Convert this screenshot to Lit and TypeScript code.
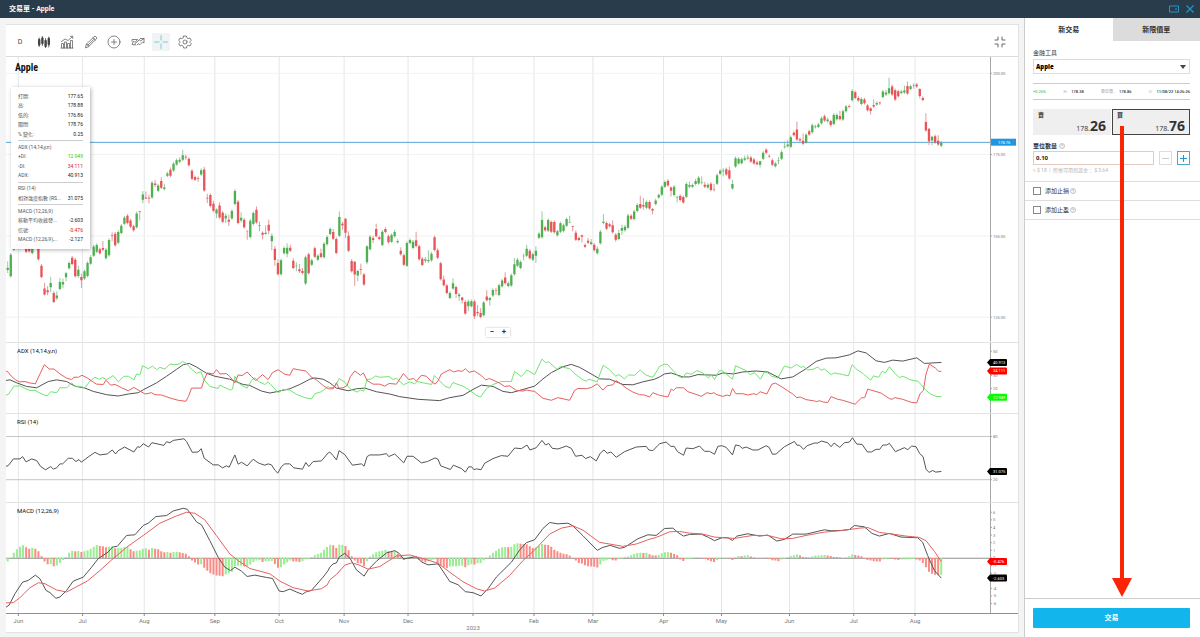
import { LitElement, html, svg, css } from "lit";
import { customElement, property } from "lit/decorators.js";

// Chart space: three units per CSS pixel at the base window size.
const UNIT_LEFT = 18;
const UNIT_WIDTH = 2954;
const FIRST_BAR = 23.1;
const BAR_STEP = 9.219;

// Daily sessions: direction, body top, body bottom, optional high and low.
// Each run is measured from its own base level.
const RUNS: { base: number; bars: string }[] = [
  {
    base: 690,
    bars: `u 114 121 95 130;u 75 140;u 50 60;u 40 50;d 42 56;d 40 52;d 40 66 40 70;d 50 65;u 50 70;d 30 50;d 50 89;d 108 142;
    d 177 195 160 198;d 182 188 170 197;u 160 173 142 188;d 190 217;u 198 206 185 212;u 157 178 145;u 157 165 147 175;
    u 131 143 127 155;u 100 116;d 84 103;d 90 140;u 120 139 108 145;d 142 152 132 175;u 125 147;u 100 139`,
  },
  {
    base: 390,
    bars: `u 383 402 376;u 351 378;u 346 366;d 359 371;d 355 360 334 365;u 360 386;u 331 377;d 316 318 308 335;d 312 347;u 307 339;
    u 288 310;u 264 282;d 258 280;d 272 291;d 290 302;u 251 293;u 244 246 244 272;u 194 210 184 220;d 203 206 185 208;
    d 204 206 195 221;u 159 203;d 161 166 150 172;u 167 183;d 154 174 142;u 173 178 162;u 131 138;d 120 138 113;u 102 122;
    u 91 104;u 90 96 82;u 76 90 60;d 81 83 75 90;d 87 106;d 123 147;d 142 150;d 145 147 140 157;u 121 134;d 119 182 111;
    d 204 206 192 220;d 196 229;d 222 243 213;u 239 251 236 265;d 227 263 218;d 249 276;u 258 266 251 280;d 270 276 255 289;
    u 244 266;u 184 223 178;d 216 280;u 264 272 248 278;d 270 293;d 303 305 303 330;u 273 322;u 250 283;d 240 278 230;
    u 287 289 276 305;d 309 315 305 329;u 309 313 287 315;d 285 303 270 314;u 318 335 311 362;d 357 391 349 408;d 400 434 389;
    u 392 434;u 355 371;u 354 372 341 383;d 354 363 345;d 393 415 386;u 408 410 398 425;d 419 425 403 430;d 424 430 415;
    u 383 462;d 374 431;u 392 405;d 356 381;u 378 390;d 371 382 357;u 342 383;u 322 344`,
  },
  {
    base: 540,
    bars: `u 148 163;d 157 177 148;d 178 220;u 112 168 95;d 132 137 126 150;d 117 159 115 175;d 168 213 155;d 244 275 238;d 246 285 244 319;
    u 274 288 270 305;d 269 271 252 285;d 285 315;u 200 248 197 254;u 171 209;d 176 181 168 190;d 148 170 132;d 173 178;
    u 156 196;d 148 157;d 170 188;u 166 186;u 157 170 150;u 184 188;d 213 224 203;d 227 255;u 190 258;u 181 190;u 186 205;
    d 182 199 156;d 200 239;d 237 256;u 239 243 232 250;u 241 245 212;u 222 242;d 173 211 168;d 212 234 206;d 251 299;
    d 300 317 288;d 318 340;u 340 355;u 311 327 296;d 322 343 318 356;u 345 350 340 364;d 354 362 352 372;d 367 402;
    u 366 380 360 395;u 365 380;d 366 410 360 418;d 397 401 376 410;d 400 412 386;u 369 407;d 351 362 332;u 355 361 352 378;
    u 331 348;d 331 333 325 346;u 317 346;u 303 320;d 294 311 278;u 311 319;u 287 318;u 254 284 235;u 240 258 235;u 247 265;
    u 228 230 222 242;u 207 228 196;d 213 236;u 224 240;u 213 228 200 250;u 162 174;u 121 173 95;d 143 152;u 121 153;
    d 127 156;d 127 158;u 155 167;u 131 156;u 137 154;u 118 138;u 128 130 108 130;d 140 142 138 155;d 159 180 152;d 175 181;
    d 167 171 165 188;d 196 201;d 183 189 175;u 188 193 178;d 195 212;u 207 221 200;u 156 191;u 126 130 103;d 130 147;d 134 140;
    d 137 158 122;d 165 180 160 186;u 160 178 150;u 145 153 135 166;u 141 152;u 107 144;d 108 117;u 95 118;u 76 94;d 73 84 48;
    d 76 80 55 90;u 67 84;d 67 86;d 88 92 85 104;u 62 73;u 46 53`,
  },
  {
    base: 150,
    bars: `u 411 435;u 397 411;d 393 407;d 413 423 410 440;u 411 436;u 441 443 440 458;d 439 451;d 442 458;u 403 441;u 406 411 396;
    u 406 411;u 394 403 387;u 384 401;u 398 400 380;d 405 411 396;u 405 413;d 402 421;d 419 421 402;u 376 402;u 363 372;
    u 362 364 355 380;d 358 374;d 361 386 350;u 403 416 390;u 325 350;u 327 341;u 328 340;u 325 330 317;u 323 326 315;
    d 323 335;d 329 341;d 338 343;u 334 345 333 353;u 309 327;d 300 309;d 318 320 314;d 331 345;u 341 349;u 331 333 322 343;
    u 307 327;u 290 292 275;u 284 289 270;u 262 291;d 249 256;d 239 269 215;d 268 272;d 273 282 251;u 255 278;d 244 254;
    u 226 247;u 230 232 224;u 224 231;u 205 220;d 199 212;u 209 214 203;d 213 225 210 231;u 195 222;u 195 208;d 198 208 183;
    u 184 209;u 170 184;d 169 171;u 123 151;d 127 144;d 144 152;u 147 162;d 149 160;d 167 181;d 175 183 172 194;
    d 165 170 148;u 159 164;d 158 160 155 165;u 125 141;u 128 134 120;u 115 130 83;d 110 134 104;d 121 149;d 124 139;
    u 125 129;u 122 128 107;d 108 131 95;u 109 117;u 105 107 100 116;d 104 110;d 117 138 115 145;d 144 150;d 216 242 190;
    d 237 274 235 286;u 261 272 258 286;d 259 278;d 273 284 256;u 279 288`,
  },
];

const HISTOGRAM = [
  -11, 0, 16, 26, 34, 38, 32, 28, 30, 28, 20, 5, -11, -19, -18, -25, -23, -15, -6, 3, 16, 22, 20, 21, 18, 20, 23, 28, 34, 39, 36,
  35, 32, 34, 35, 29, 30, 31, 33, 34, 26, 20, 22, 23, 28, 29, 25, 30, 28, 26, 20, 17, 18, 16, 18, 19, 17, 15, 13, 5, -8, -14, -20,
  -19, -30, -39, -46, -50, -53, -54, -55, -50, -46, -42, -25, -24, -24, -26, -25, -20, -12, -8, -7, -12, -10, -10, -9, -18, -30,
  -28, -20, -14, -8, -11, -11, -12, -10, -4, -4, 3, 8, 12, 16, 25, 33, 40, 38, 30, 40, 40, 36, 23, 5, -8, -15, -17, -25, -10, 4,
  11, 17, 20, 22, 25, 20, 19, 20, 13, 5, -6, -3, 4, 5, 3, -6, -11, -13, -9, -7, -5, -15, -23, -28, -31, -26, -25, -25, -24, -24,
  -28, -22, -19, -20, -16, -15, -7, -1, 7, 16, 22, 28, 32, 33, 32, 34, 41, 44, 43, 42, 41, 35, 30, 32, 36, 42, 40, 39, 34, 25, 20,
  16, 13, 11, 7, -2, -8, -15, -17, -22, -25, -26, -27, -29, -20, -9, -7, -3, -7, -8, -4, -2, 2, 4, 8, 12, 15, 16, 15, 16, 11, 8, 7,
  9, 14, 17, 17, 16, 12, 8, -5, -9, -4, -3, -2, 1, 1, -1, -3, -7, -10, -12, -7, -2, -1, -1, -2, -6, 2, 6, 5, 7, 8, 4, 1, -1, -1,
  -1, 1, -3, -7, -8, -10, -5, -2, 3, 6, 8, 10, 7, 3, 2, 3, 5, 7, 7, 8, 9, 7, 6, 3, 3, 1, 0, 1, 5, 10, 9, 7, 5, -2, -6, -8, -10,
  -11, -11, -5, -3, -1, -2, -5, -6, -5, -5, -5, -4, -3, -5, -8, -15, -28, -42, -48, -51, -52, -51, -48,
];

// Each series is stored as three consecutive windows, 990 units wide.
type Series = [string, string, string];
const PLUS_DI: Series = [
  "16,165 25,162 42,137 60,136 75,144 90,150 105,150 120,158 141,167 152,154 170,157 180,142 200,142 215,127 225,137 240,138 255,142 270,122 285,110 298,116 308,111 320,117 340,105 355,124 372,107 385,107 402,118 410,100 420,103 428,75 445,84 458,76 470,87 480,80 495,85 510,70 525,72 540,69 548,62 562,70 575,86 590,98 603,93 612,117 630,138 655,144 660,134 672,140 692,149 698,146 705,107 715,127 728,136 742,143 755,120 765,112 778,124 795,132 805,124 820,140 835,157 850,147 870,149 890,162 915,172 935,176 945,160 965,154 985,138",
  "0,142 15,140 28,114 45,125 62,146 82,155 92,149 102,152 112,117 125,115 138,106 150,110 178,108 190,117 200,113 221,133 240,124 255,130 262,123 280,127 306,132 314,105 330,121 345,137 360,143 370,126 385,132 400,137 420,150 440,165 453,170 470,145 490,132 515,123 545,123 555,92 575,108 592,88 615,102 637,55 648,66 657,63 682,86 692,77 702,80 720,84 740,103 760,118 770,122 778,116 803,124 812,97 821,74 840,87 858,107 868,102 885,115 897,103 915,104 932,88 950,104 970,110 985,86",
  "0,77 15,70 25,72 45,95 58,108 70,112 80,97 95,101 112,90 130,97 147,112 155,103 165,117 178,92 187,89 219,116 228,75 260,90 272,102 285,96 303,116 315,94 325,97 337,107 355,112 375,76 395,82 411,71 425,80 432,77 445,88 460,86 475,79 485,89 495,85 515,102 525,97 550,102 567,106 578,72 592,86 612,100 620,107 634,119 642,106 658,110 668,92 678,97 690,78 705,97 720,111 730,107 740,111 750,117 775,122 785,132 800,150 815,162 830,168 846,169",
];
const MINUS_DI: Series = [
  "16,90 25,95 35,108 47,118 58,124 75,123 88,127 106,130 120,100 133,72 148,85 162,85 180,100 200,113 215,117 222,110 236,110 246,104 262,112 280,125 290,131 310,132 318,119 332,134 346,132 365,142 385,151 402,141 420,152 436,161 455,157 465,163 485,164 510,173 535,180 558,183 566,168 575,143 605,143 612,120 622,97 640,100 650,87 660,100 680,99 690,108 705,127 715,103 727,105 742,94 755,108 768,120 788,102 805,117 818,96 835,87 855,101 870,104 880,84 895,87 918,91 935,110 950,118 970,135 985,145",
  "0,145 10,145 20,127 27,143 40,142 52,135 62,108 75,91 92,104 101,97 112,120 130,131 150,131 165,137 178,129 200,131 221,99 237,117 252,114 260,122 275,104 290,107 305,123 316,131 325,121 335,100 360,87 372,94 385,90 398,92 407,84 418,95 434,91 455,105 468,118 480,114 510,128 525,138 540,136 560,150 580,152 590,149 615,153 640,174 665,180 685,172 720,180 735,150 745,144 770,145 785,141 803,130 820,149 832,136 850,133 859,120 875,131 890,143 910,155 930,163 945,164 960,170 970,157 985,163",
  "0,165 25,170 35,146 42,150 50,142 72,142 85,154 110,162 125,168 142,157 155,160 163,157 172,163 190,168 203,164 211,167 219,144 229,160 250,160 265,164 283,160 292,163 302,154 322,161 337,131 348,128 365,138 385,151 400,161 412,172 422,170 440,178 465,182 472,184 480,181 490,185 505,187 515,169 535,177 550,180 587,192 606,173 616,172 625,146 638,150 665,158 690,175 698,177 706,172 730,177 755,186 772,188 782,160 792,150 800,100 810,70 828,82 838,92 846,92",
];
const ADX: Series = [
  "16,120 30,118 50,127 80,138 110,142 145,123 170,118 200,123 225,137 255,143 280,153 320,163 355,167 385,161 415,157 430,148 470,127 500,107 530,86 550,72 568,68 590,79 620,98 645,107 690,116 730,132 750,135 785,152 810,158 830,154 870,145 900,132 930,116 945,112 970,116",
  "0,127 20,143 55,151 80,145 105,143 140,154 180,161 210,169 265,177 330,181 360,172 400,165 430,147 455,134 490,138 520,153 545,157 570,150 615,137 640,115 665,96 700,78 725,71 750,80 790,103 810,115 840,116 880,132 910,133 940,124 975,116",
  "0,109 15,100 35,97 70,109 90,109 115,102 170,104 190,97 222,100 250,94 290,91 325,94 365,115 400,109 440,84 470,62 500,52 530,51 570,42 595,30 620,36 650,60 675,65 700,58 730,61 772,51 795,68 846,65",
];
const RSI: Series = [
  "16,378 25,375 40,355 60,355 68,348 78,364 95,355 110,360 122,378 137,388 152,378 160,386 170,382 180,370 188,370 205,353 217,353 228,363 237,357 244,365 265,349 285,335 300,343 322,340 337,328 347,340 355,330 374,319 402,334 413,318 420,320 430,309 446,319 456,306 492,314 500,303 510,306 520,299 552,294 560,302 577,335 595,334 604,324 613,353 640,373 655,373 668,382 680,376 688,380 705,343 715,371 725,365 742,376 760,356 775,367 783,370 795,374 805,370 815,373 825,389 834,398 845,378 855,370 870,370 882,382 908,386 918,366 927,378 940,363 965,361 985,337",
  "0,334 10,345 20,358 28,330 45,342 68,374 95,370 103,377 112,348 120,343 150,343 170,339 177,348 195,340 222,367 232,347 250,347 275,367 293,363 316,352 325,356 333,376 362,387 371,374 395,384 407,395 417,379 426,379 433,388 440,385 454,388 465,368 490,354 515,345 535,347 555,322 575,324 592,313 601,328 620,321 637,299 648,313 657,308 668,323 685,325 710,316 725,323 738,347 757,344 768,354 782,348 800,361 812,338 823,328 833,338 844,334 860,350 885,333 920,319 950,317 958,328 970,330 985,314",
  "0,309 20,304 34,317 44,317 54,333 72,344 80,322 100,324 120,316 135,332 150,332 165,341 175,317 187,315 200,320 219,343 228,313 240,315 248,323 260,319 280,328 295,328 320,315 329,320 339,341 350,340 375,318 405,302 412,313 421,314 432,326 443,315 465,307 475,307 486,301 505,306 515,318 524,307 541,320 555,306 570,304 579,291 592,310 608,311 624,334 636,334 650,326 661,326 670,313 681,313 690,308 708,333 735,321 745,327 757,316 770,318 781,339 791,348 800,386 809,396 820,390 829,395 846,393",
];
const MACD: Series = [
  "16,802 27,795 45,760 68,725 85,720 106,704 120,715 138,750 150,757 168,774 180,770 200,750 220,722 250,710 275,680 295,654 325,634 338,619 352,617 380,584 405,582 430,554 445,547 468,527 500,524 520,510 550,502 562,505 575,522 590,543 605,552 630,600 655,650 675,680 692,690 705,680 725,692 742,708 765,704 800,711 818,714 838,752 850,754 870,746 890,755 908,762 918,755 935,750 970,710 985,690",
  "0,680 10,670 20,667 28,650 45,638 62,655 80,688 103,707 115,688 140,662 170,637 195,630 208,638 222,655 260,648 275,664 295,673 325,670 345,700 360,723 385,733 407,754 430,757 454,767 475,745 500,710 520,690 545,665 570,628 590,606 615,597 640,563 660,545 685,549 715,547 730,555 760,585 803,629 820,620 842,614 870,623 885,620 925,594 955,582 980,584",
  "0,576 15,563 40,562 55,575 72,586 90,581 125,580 147,590 165,600 187,591 205,591 219,599 232,586 265,579 300,586 325,583 352,601 375,596 400,580 440,580 495,567 515,570 545,569 570,566 585,554 615,558 638,578 660,586 690,578 725,589 775,591 790,605 805,645 825,690 846,713",
];
const SIGNAL: Series = [
  "16,788 40,787 60,772 90,742 115,727 135,730 170,749 200,755 230,739 262,722 300,690 335,658 380,620 430,584 480,547 530,525 560,514 585,517 615,537 650,585 690,640 715,660 750,684 810,700 840,722 880,742 925,752 965,745 982,734",
  "0,718 20,702 45,674 65,667 85,672 115,686 150,678 200,646 240,643 290,657 325,668 360,695 400,724 440,745 465,752 495,743 540,705 580,660 615,628 660,580 695,562 730,555 760,568 810,605 840,610 880,617 920,610 955,597 980,590",
  "0,586 30,573 60,572 90,577 130,580 165,589 225,593 280,584 325,584 365,594 400,593 440,584 495,574 550,569 600,562 625,560 660,575 700,580 740,586 780,590 800,600 825,632 846,663",
];

const MONTHS: [number, string][] = [
  [55, "Jun"], [248, "Jul"], [433, "Aug"], [645, "Sep"], [838, "Oct"], [1033, "Nov"], [1225, "Dec"], [1420, "2023"],
  [1603, "Feb"], [1780, "Mar"], [1992, "Apr"], [2166, "May"], [2370, "Jun"], [2563, "Jul"], [2747, "Aug"],
];

interface Tick { at: number; text: string }
interface Tag { at: number; text: string; color: string; wide?: boolean }
interface Line { series: Series; color: string }
interface Pane {
  title: string;
  top: number;
  height: number;
  rules: number[];
  ruleColor: string;
  lines: Line[];
  ticks: Tick[];
  tags: Tag[];
}

const range = (from: number, to: number) => Array.from({ length: from - to + 1 }, (_, i) => from - i);

const PRICE: Pane = {
  title: "", top: 171, height: 855, rules: [220, 464, 709, 953], ruleColor: "#f1f2f3", lines: [],
  ticks: [{ at: 220, text: "200.00" }, { at: 464, text: "175.00" }, { at: 709, text: "150.00" }, { at: 953, text: "125.00" }],
  tags: [{ at: 427, text: "178.76", color: "#2196e3", wide: true }],
};
const STUDIES: Pane[] = [
  {
    title: "ADX (14,14,y,n)", top: 6, height: 213, rules: [], ruleColor: "",
    lines: [{ series: ADX, color: "#555" }, { series: PLUS_DI, color: "#6fe66f" }, { series: MINUS_DI, color: "#e66060" }],
    ticks: [{ at: 31, text: "50" }, { at: 105, text: "30" }, { at: 144, text: "20" }],
    tags: [
      { at: 65, text: "40.913", color: "#000" },
      { at: 91, text: "34.111", color: "#f00" },
      { at: 171, text: "12.949", color: "#0f0" },
    ],
  },
  {
    title: "RSI (14)", top: 219, height: 267, rules: [287, 418], ruleColor: "#c4c4c4",
    lines: [{ series: RSI, color: "#555" }],
    ticks: [{ at: 287, text: "80" }, { at: 418, text: "20" }],
    tags: [{ at: 393, text: "31.075", color: "#000" }],
  },
  {
    title: "MACD (12,26,9)", top: 486, height: 333, rules: [653], ruleColor: "#8f8f8f",
    lines: [{ series: MACD, color: "#555" }, { series: SIGNAL, color: "#e66060" }],
    ticks: range(6, -6).map((n) => ({ at: 652 - n * 23, text: String(n) })),
    tags: [
      { at: 663, text: "-0.476", color: "#f00" },
      { at: 713, text: "-2.603", color: "#000" },
    ],
  },
];

function joinSeries(series: Series): string {
  return series
    .map((part, i) => part.split(" ").map((p) => {
      const [x, y] = p.split(",").map(Number);
      return `${x + i * 990},${y}`;
    }).join(" "))
    .join(" ");
}

function candlePaths() {
  const out = { u: { body: "", wick: "" }, d: { body: "", wick: "" } };
  let index = 0;
  for (const run of RUNS) {
    for (const bar of run.bars.split(";")) {
      const [dir, ...rest] = bar.trim().split(/\s+/);
      const [top, bottom, high = top - 5, low = bottom + 4] = rest.map(Number);
      const x = FIRST_BAR + index * BAR_STEP;
      const p = out[dir as "u" | "d"];
      p.body += `M${x - 3.5} ${run.base + top}h7V${run.base + bottom}h-7Z`;
      p.wick += `M${x} ${run.base + high}V${run.base + low}`;
      index++;
    }
  }
  return out;
}

function histogramPaths() {
  let rise = "";
  let fall = "";
  let rising = true;
  HISTOGRAM.slice(0, 305).forEach((v, i) => {
    const prev = i ? HISTOGRAM[i - 1] : -14;
    if (v !== prev) rising = v > prev;
    const d = `M${FIRST_BAR + i * BAR_STEP} 652v${-v}`;
    if (rising) rise += d;
    else fall += d;
  });
  return { rise, fall };
}

@customElement("price-chart")
export class PriceChart extends LitElement {
  static styles = css`
    :host { display: grid; grid-template-rows: 285fr 71fr 89fr 111fr 18px; min-height: 0; flex: 1; font-family: Roboto, "Noto Sans CJK TC", sans-serif; }
    .pane { display: grid; grid-template-columns: minmax(0, 1fr) 28px; grid-template-rows: minmax(0, 1fr); min-height: 0; position: relative; border-bottom: 1px solid #e2e3e4; box-sizing: border-box; }
    .pane.last { border-bottom-color: #8f8f8f; }
    svg { display: block; width: 100%; height: 100%; min-height: 0; overflow: hidden; }
    .scale { overflow: visible; }
    .title { position: absolute; left: 11px; top: 4px; margin: 0; font-size: 6px; line-height: 8px; font-weight: 400; color: #111; }
    .name { left: 9px; top: 5px; font: bold 10px/12px "Liberation Sans Narrow", "Roboto Condensed", Roboto, sans-serif; }
    .thin { fill: none; stroke-width: 1; vector-effect: non-scaling-stroke; }
    .tick { font-size: 4px; fill: #777; }
    .tag { font-size: 4px; fill: #fff; }
    .tag-mark { overflow: visible; }
    .months { width: calc(100% - 28px); overflow: visible; }
    .month { font-size: 6px; fill: #777; text-anchor: middle; }
    .zoom { position: absolute; left: calc(50% - 26px); bottom: 5px; display: flex; background: #fff; box-shadow: 0 0 2px #bbb; }
    .zoom button { width: 12px; height: 9px; margin: 0; padding: 0; border: 0; background: #fff; font: bold 8px/8px Roboto, sans-serif; color: #333; }
    .readout { position: absolute; left: 5px; top: 30px; width: 79px; height: 162px; box-sizing: border-box; padding: 5px 7px; display: flex; flex-direction: column; justify-content: space-between; background: rgba(255, 255, 255, 0.96); box-shadow: 1px 1px 4px rgba(0, 0, 0, 0.3); font-size: 5px; line-height: 9px; color: #555; }
    .entry { display: flex; justify-content: space-between; white-space: nowrap; }
    .entry b { font-weight: 400; color: #222; }
    .entry .up { color: #22cc22; }
    .entry .down { color: #e01515; }
    .readout hr { width: 100%; margin: 1px 0; border: 0; border-top: 1px solid #ccc; }
  `;

  private candles = candlePaths();
  private histogram = histogramPaths();

  private renderPane(pane: Pane, content: unknown, last = false, extra: unknown = "") {
    const bottom = pane.top + pane.height;
    const pct = (v: number) => `${((v - pane.top) / pane.height) * 100}%`;
    return html`
      <section class=${last ? "pane last" : "pane"}>
        <svg viewBox="${UNIT_LEFT} ${pane.top} ${UNIT_WIDTH} ${pane.height}" preserveAspectRatio="none" aria-hidden="true">
          ${MONTHS.map(([x]) => svg`<path class="thin" stroke="#e3e6e8" d="M${x} ${pane.top}V${bottom}" />`)}
          ${pane.rules.map((y) => svg`<path class="thin" stroke=${pane.ruleColor} d="M0 ${y}H3000" />`)}
          ${content}
          ${pane.lines.map((l) => svg`<polyline class="thin" stroke=${l.color} points=${joinSeries(l.series)} />`)}
        </svg>
        <svg class="scale">
          <rect x="0" y="0" width="1" height="100%" fill="#a5a8aa" />
          ${pane.ticks.map((t) => svg`
            <line x1="0" x2="2" y1=${pct(t.at)} y2=${pct(t.at)} stroke="#a5a8aa" />
            <text class="tick" x="3" y=${pct(t.at)} dy="1.5">${t.text}</text>`)}
          ${pane.tags.map((t) => svg`
            <svg class="tag-mark" y=${pct(t.at)}>
              <path fill=${t.color} d=${t.wide ? "M1 -3.5H26V3.5H1Z" : "M-3 0L0 -3.5H16Q17 -3.5 17 -2.5V2.5Q17 3.5 16 3.5H0Z"} />
              <text class="tag" x=${t.wide ? 8 : 3} y="1.5">${t.text}</text>
            </svg>`)}
        </svg>
        ${pane.title ? html`<h3 class="title">${pane.title}</h3>` : ""}
        ${extra}
      </section>`;
  }

  private renderReadout() {
    const row = (label: string, value = "", tone = "") =>
      html`<div class="entry"><span>${label}</span><b class=${tone}>${value}</b></div>`;
    return html`<div class="readout">
      ${row("打開:", "177.65")}${row("高:", "178.88")}${row("低的:", "176.86")}${row("關閉:", "178.76")}${row("% 變化:", "0.25")}
      <hr />${row("ADX (14,14,y,n)")}${row("+DI:", "12.949", "up")}${row("-DI:", "34.111", "down")}${row("ADX:", "40.913")}
      <hr />${row("RSI (14)")}${row("相對強度指數 (RS...", "31.075")}
      <hr />${row("MACD (12,26,9)")}${row("移動平均收斂發...", "-2.603")}${row("信號:", "-0.476", "down")}${row("MACD (12,26,9),...", "-2.127")}
    </div>`;
  }

  render() {
    const { u, d } = this.candles;
    const bars = svg`
      <path d="M0 427.5H3000" class="thin" stroke="#5aa5d6" />
      <path d=${u.wick} stroke="#7fb98a" stroke-width="2.4" />
      <path d=${d.wick} stroke="#dc8080" stroke-width="2.4" />
      <path d=${u.body} fill="#4fb050" />
      <path d=${d.body} fill="#ea5358" />`;
    const histogram = svg`
      <path d=${this.histogram.rise} stroke="#98ee90" stroke-width="6" />
      <path d=${this.histogram.fall} stroke="#fb8a84" stroke-width="6" />`;
    return html`
      ${this.renderPane(PRICE, bars, false, html`
        <h2 class="title name">Apple</h2>
        ${this.renderReadout()}
        <div class="zoom"><button aria-label="縮小">−</button><button aria-label="放大">+</button></div>`)}
      ${this.renderPane(STUDIES[0], "")}
      ${this.renderPane(STUDIES[1], "")}
      ${this.renderPane(STUDIES[2], histogram, true)}
      <svg class="months">
        ${MONTHS.map(([x, text]) => {
          const left = `${((x - UNIT_LEFT) / UNIT_WIDTH) * 100}%`;
          return svg`
            <line x1=${left} x2=${left} y1="0" y2="2" stroke="#888" />
            <text class="month" x=${left} y=${text === "2023" ? 16 : 9}>${text}</text>`;
        })}
      </svg>`;
  }
}

@customElement("tool-bar")
export class ToolBar extends LitElement {
  static styles = css`
    :host { display: flex; justify-content: space-between; align-items: center; height: 32px; padding: 2px 9px 0 5px; box-sizing: border-box; border-bottom: 1px solid #dcdcdc; flex: none; }
    .tools { display: flex; justify-content: space-between; width: 183px; }
    button { width: 18px; height: 18px; padding: 0; border: 0; background: none; display: grid; place-items: center; font: 7px/8px Roboto, sans-serif; color: #444; }
    .active { background: #f1f3f4; }
    svg { width: 14px; height: 14px; fill: none; stroke: #666; stroke-width: 0.8; stroke-linecap: round; stroke-linejoin: round; }
    .solid { stroke: #444; }
    .teal { stroke: #54c4d0; }
  `;
  render() {
    return html`
      <div class="tools">
        <button aria-label="週期">D</button>
        <button aria-label="圖表類型"><svg class="solid" viewBox="0 0 14 14">
          <path d="M2.2 3V11.500M5.400 1.500V10.500M8.600 3.500V12.500M11.800 2V12" /><path stroke-width="2.400" d="M2.200 5V9.500M5.400 3.500V8M8.600 6V11M11.800 4V9" /></svg></button>
        <button aria-label="指標"><svg viewBox="0 0 14 14">
          <path d="M1.500 13V8.500H3.500V13M4.500 13V7H6.500V13M7.500 13V8.500H9.500V13M10.500 13V5.500H12.500V13M1 13H13" /><path d="M1.500 6.500L5 4L8 5.500L12.500 1.500M10.500 1.300H12.700V3.500" /></svg></button>
        <button aria-label="繪圖"><svg viewBox="0 0 14 14">
          <path d="M1.500 12.500L2.500 9L10 1.800Q11 .8 12.200 1.900Q13.200 3 12.300 4L4.800 11.400ZM9 2.800L11.300 5M2.500 9Q4.500 9.500 4.800 11.400M4 10L10.500 3.800" /></svg></button>
        <button aria-label="新增"><svg viewBox="0 0 14 14"><circle cx="7" cy="7" r="6" /><path d="M7 4.500V9.500M4.500 7H9.500" /></svg></button>
        <button aria-label="比較"><svg viewBox="0 0 14 14">
          <path d="M1 6V4.500H6.500L4 7.500L2.500 6L1 9.500L4.500 10L3.800 9L8.500 4.500L9.500 6L13 3.500V8L11.500 7L8.500 10L7.500 8.500L6 10M9.500 3.500H13" /></svg></button>
        <button class="active" aria-label="十字線"><svg class="teal" viewBox="0 0 14 14">
          <path d="M7 .5V5M7 9V13.500M.5 7H5M9 7H13.500" /></svg></button>
        <button aria-label="設定"><svg viewBox="0 0 14 14">
          <circle cx="7" cy="7" r="2" /><path d="M5.600 1H8.400L8.900 2.900L10.200 3.600L12 3L13.300 5.300L12 6.600V7.400L13.300 8.700L12 11L10.200 10.400L8.900 11.100L8.400 13H5.600L5.100 11.100L3.800 10.400L2 11L.7 8.700L2 7.400V6.600L.7 5.300L2 3L3.800 3.600L5.100 2.900Z" /></svg></button>
      </div>
      <button aria-label="退出全螢幕"><svg viewBox="0 0 14 14">
        <path d="M5 2V5H2M9 2V5H12M5 12V9H2M9 12V9H12" stroke-width="1" /></svg></button>`;
  }
}

@customElement("order-ticket")
export class OrderTicket extends LitElement {
  static styles = css`
    :host { display: flex; flex-direction: column; background: #fff; border-left: 1px solid #ccc; box-sizing: border-box; font: 6px/8px Roboto, "Noto Sans CJK TC", sans-serif; color: #333; min-width: 0; }
    .tabs { display: grid; grid-template-columns: 1fr 1fr; flex: none; }
    .tabs button { height: 23px; border: 0; padding: 0; background: #fff; font: bold 7px/10px Roboto, "Noto Sans CJK TC", sans-serif; color: #333; }
    .tabs .idle { background: #dcdcdc; }
    .body { padding: 8px 10px 0 8px; }
    .label { display: block; }
    .pick { position: relative; margin-top: 2px; }
    .pick select { appearance: none; display: block; width: 100%; height: 15px; box-sizing: border-box; padding: 0 2px; border: 1px solid #dcdcdc; border-radius: 0; background: #fff; font: 800 6px/8px "Open Sans", sans-serif; color: #000; }
    .pick svg { position: absolute; right: 4px; top: 6px; width: 6px; height: 4px; fill: #444; pointer-events: none; }
    .stats { display: flex; justify-content: space-between; margin-top: 9px; border: solid #ccc; border-width: 1px 0; font-size: 4px; line-height: 15px; color: #aaa; white-space: nowrap; }
    .stats b { font-weight: 500; color: #333; margin-left: 4px; }
    .stats .gain { color: #3fae49; }
    .deal { display: grid; grid-template-columns: 1fr 1fr; gap: 1px; margin-top: 9px; }
    .quote { display: flex; flex-direction: column; justify-content: space-between; height: 26px; padding: 2px 5px 1px; border: 0; background: #efefef; color: #333; font: bold 6px/8px "Noto Sans CJK TC", sans-serif; text-align: left; }
    .quote.chosen { padding: 1px 4px 0; border: 1px solid #444; }
    .price { align-self: flex-end; font: 7px/14px "Open Sans", sans-serif; }
    .price b { font-size: 14px; }
    .amount-label { display: flex; align-items: center; gap: 2px; margin-top: 7px; font-weight: bold; }
    .help { width: 6px; height: 6px; fill: none; stroke: #888; stroke-width: 0.5; }
    .amount { display: flex; gap: 5px; margin-top: 1px; }
    .amount input { flex: 1; min-width: 0; height: 14px; box-sizing: border-box; padding: 0 2px; border: 1px solid #e6c9c0; font: bold 6px/8px "Open Sans", sans-serif; color: #222; }
    .amount button { width: 13px; height: 14px; padding: 0; border: 1px solid #ddd; background: #fff; display: grid; place-items: center; }
    .amount .plus { border-color: #4aa9d0; }
    .amount svg { width: 7px; height: 7px; stroke: #ccc; }
    .amount .plus svg { stroke: #2196c9; }
    .hint { margin: 1px 0 0; font-size: 5px; line-height: 8px; color: #b5b5b5; white-space: pre; }
    .option { display: flex; align-items: center; gap: 4px; height: 19px; padding-left: 8px; border-bottom: 1px solid #ddd; box-sizing: border-box; }
    .options { margin-top: 7px; border-top: 1px solid #ddd; }
    .option input { appearance: none; width: 8px; height: 8px; margin: 0; border: 1px solid #888; box-sizing: border-box; background: #fff; }
    .option .help { margin-left: -3px; }
    .footer { margin-top: auto; padding: 9px 10px 9px 8px; border-top: 1px solid #ccc; }
    .submit { display: block; width: 100%; height: 20px; padding: 0; border: 0; border-radius: 1px; background: #12b6ec; color: #fff; font: bold 7px/10px Roboto, "Noto Sans CJK TC", sans-serif; }
  `;
  private help() {
    return html`<svg class="help" viewBox="0 0 6 6" aria-hidden="true"><circle cx="3" cy="3" r="2.500" /><path d="M2.200 2.400Q2.300 1.600 3 1.600Q3.800 1.700 3.700 2.400Q3.600 2.800 3 3.100V3.600M3 4.100V4.500" /></svg>`;
  }
  render() {
    return html`
      <div class="tabs"><button>新交易</button><button class="idle">新限價單</button></div>
      <div class="body">
        <label class="label" for="instrument">金融工具</label>
        <div class="pick">
          <select id="instrument"><option>Apple</option></select>
          <svg viewBox="0 0 6 4" aria-hidden="true"><path d="M0 0H6L3 4Z" /></svg>
        </div>
        <div class="stats">
          <span class="gain">+0.26%</span><span>H:<b>178.38</b></span><span>最低價 :<b>178.86</b></span><span>U:<b>11/08/22 14:26:26</b></span>
        </div>
        <div class="deal">
          <button class="quote">賣<span class="price">178.<b>26</b></span></button>
          <button class="quote chosen">買<span class="price">178.<b>76</b></span></button>
        </div>
        <div class="amount-label"><label for="units">單位數量</label>${this.help()}</div>
        <div class="amount">
          <input id="units" type="text" .value=${"0.10"} />
          <button aria-label="減少"><svg viewBox="0 0 7 7"><path d="M0 3.500H7" /></svg></button>
          <button class="plus" aria-label="增加"><svg viewBox="0 0 7 7"><path d="M0 3.500H7M3.500 0V7" /></svg></button>
        </div>
        <p class="hint">≈ $ 18  |  所需可用保證金： $ 3.64</p>
      </div>
      <div class="options">
        <label class="option"><input type="checkbox" />添加止損 ${this.help()}</label>
        <label class="option"><input type="checkbox" />添加止盈 ${this.help()}</label>
      </div>
      <div class="footer"><button class="submit">交易</button></div>`;
  }
}

@customElement("app-root")
export class AppRoot extends LitElement {
  @property() heading = "交易單 - Apple";

  static styles = css`
    :host { display: flex; flex-direction: column; height: 100vh; position: relative; overflow: hidden; background: #f4f4f4; font-family: Roboto, "Noto Sans CJK TC", sans-serif; }
    .bar { display: flex; justify-content: space-between; align-items: center; height: 18px; padding: 0 5px 0 9px; background: #283c4b; flex: none; }
    h1 { margin: 0; font-size: 7px; line-height: 10px; font-weight: bold; color: #fff; }
    .window { display: flex; gap: 6px; }
    .window button { padding: 0; border: 0; background: none; display: grid; }
    .window svg { width: 10px; height: 8px; fill: none; stroke: #2793c4; }
    .main { flex: 1; min-height: 0; display: grid; grid-template-columns: minmax(0, 1fr) 176px; }
    .card { display: flex; flex-direction: column; min-height: 0; margin: 6px 5px 4px 6px; background: #fff; border: 1px solid #e2e2e2; border-width: 1px 1px 1px 0; box-sizing: border-box; }
    .arrow { position: absolute; right: 68px; top: 126px; width: 20px; height: calc(100% - 166px); display: flex; flex-direction: column; align-items: center; pointer-events: none; }
    .shaft { width: 4px; flex: 1; background: #fb2407; }
    .head { width: 20px; height: 19px; background: #fb2407; clip-path: polygon(0 0, 100% 0, 50% 100%); }
  `;
  render() {
    return html`
      <header class="bar">
        <h1>${this.heading}</h1>
        <div class="window">
          <button aria-label="停靠"><svg viewBox="0 0 10 8"><path d="M.5 1H9.500V7H.5ZM7 3V5" /></svg></button>
          <button aria-label="關閉"><svg viewBox="0 0 10 8"><path stroke-width="1.200" d="M1.500 .5L8.500 7.500M8.500 .5L1.500 7.500" /></svg></button>
        </div>
      </header>
      <main class="main">
        <div class="card"><tool-bar></tool-bar><price-chart></price-chart></div>
        <order-ticket></order-ticket>
      </main>
      <div class="arrow"><div class="shaft"></div><div class="head"></div></div>`;
  }
}
